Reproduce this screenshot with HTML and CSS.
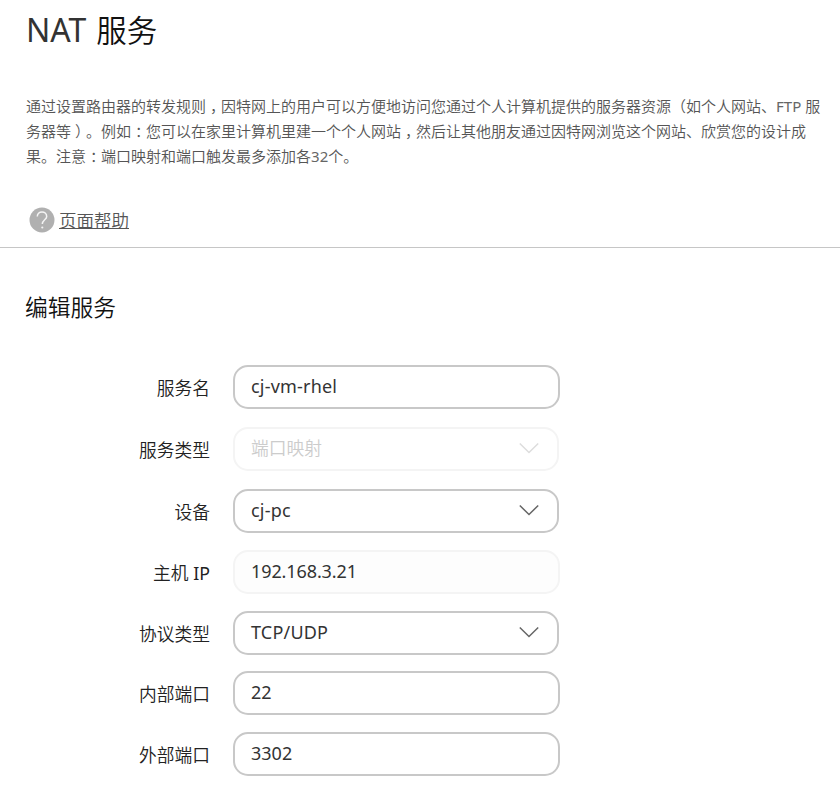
FILE: index.html
```html
<!DOCTYPE html>
<html lang="zh-CN"><head><meta charset="utf-8"><title>NAT 服务</title><link rel="stylesheet" href="styles.css"></head>
<body>
<header class="intro">
<h1><span class="latin">NAT</span> 服务</h1>
<p class="desc"><span class="line">通过设置路由器的转发规则<span class="mark">，</span>因特网上的用户可以方便地访问您通过个人计算机提供的服务器资源（如个人网站、<span class="ftp">FTP</span> 服</span><span class="line">务器等<span class="mark">）</span>。例如<span class="mark">：</span>您可以在家里计算机里建一个个人网站<span class="mark">，</span>然后让其他朋友通过因特网浏览这个网站、欣赏您的设计成</span><span class="line">果。注意<span class="mark">：</span>端口映射和端口触发最多添加各<span class="ftp">32</span>个。</span></p>
<a class="help"><svg class="help-icon" viewBox="0 0 26 26"><circle cx="13" cy="13" r="12.5" fill="#b0b0b0"/><path d="M8.3 9.5C8.3 3.4 17.7 3.4 17.7 9.4C17.7 12.6 13.3 13 13.3 17" fill="none" stroke="#f4f4f4" stroke-width="1.5"/><circle cx="13.3" cy="20.5" r="1.1" fill="#f4f4f4"/></svg><span>页面帮助</span></a>
</header>
<main>
<h2>编辑服务</h2>
<form class="form">
<div class="row"><label>服务名</label><div class="field"><span class="name">cj-vm-rhel</span></div></div>
<div class="row"><label>服务类型</label><div class="field select disabled"><span>端口映射</span><svg class="chevron" viewBox="0 0 20 12"><path d="M.8 1.5L10 10.5L19.2 1.5"/></svg></div></div>
<div class="row"><label>设备</label><div class="field select"><span class="name">cj-pc</span><svg class="chevron" viewBox="0 0 20 12"><path d="M.8 1.5L10 10.5L19.2 1.5"/></svg></div></div>
<div class="row"><label>主机 <span class="ip">IP</span></label><div class="field readonly"><span class="address">192.168.3.21</span></div></div>
<div class="row"><label>协议类型</label><div class="field select"><span class="name">TCP/UDP</span><svg class="chevron" viewBox="0 0 20 12"><path d="M.8 1.5L10 10.5L19.2 1.5"/></svg></div></div>
<div class="row"><label>内部端口</label><div class="field"><span>22</span></div></div>
<div class="row"><label>外部端口</label><div class="field"><span>3302</span></div></div>
</form>
</main>
</body></html>
```
FILE: styles.css
```css
* { box-sizing: border-box; }
body { margin: 0; background: #fff; color: #222; font-family: "Noto Sans", "Noto Sans CJK SC", sans-serif; font-weight: 350; height: 810px; overflow: hidden; text-spacing-trim: space-all; }
h1, h2, p { margin: 0; font-weight: 350; }
.intro { height: 248px; padding: 7px 0 0 26px; border-bottom: 1px solid #c6c6c6; }
h1 { height: 87px; font-size: 30.5px; line-height: 46px; color: #111; }
.latin { font-size: 32px; font-weight: 400; margin-right: 2px; color: #333; }
.desc { height: 112px; font-size: 15px; line-height: 25px; color: #555; }
.line { display: block; white-space: nowrap; }
.mark { font-feature-settings: "halt"; padding: 0 3.5px 0 4px; }
.ftp { font-weight: 400; color: #666; }
.help { display: flex; align-items: center; height: 28px; padding-left: 3px; gap: 4px; font-size: 17.5px; line-height: 26px; color: #555; text-decoration: underline; }
.help-icon { width: 26px; height: 26px; }
h2 { height: 117px; padding: 40px 0 0 25px; font-size: 22.75px; line-height: 40px; color: #111; }
.form { display: grid; grid-template-rows: 62px 62px 61px 61px 60px 61px 44px; }
.row { display: flex; }
label { width: 210px; margin-right: 23px; text-align: right; font-size: 17.75px; line-height: 46px; }
.ip { font-weight: 400; }
.field { display: flex; align-items: center; justify-content: space-between; width: 327px; height: 44px; padding: 0 18px 2px 16px; border: 2px solid #c8c8c8; border-radius: 15px; font-size: 18px; font-weight: 400; line-height: 40px; color: #333; }
.select { width: 326px; }
.disabled, .readonly { border-color: #f4f4f4; }
.readonly { background: #fdfdfd; }
.disabled { color: #ccc; font-size: 17.75px; font-weight: 350; }
.name { letter-spacing: .2px; }
.address { letter-spacing: -.1px; }
.chevron { width: 20px; height: 12px; fill: none; stroke: #666; stroke-width: 1.5; }
.disabled .chevron { stroke: #ddd; }
```
